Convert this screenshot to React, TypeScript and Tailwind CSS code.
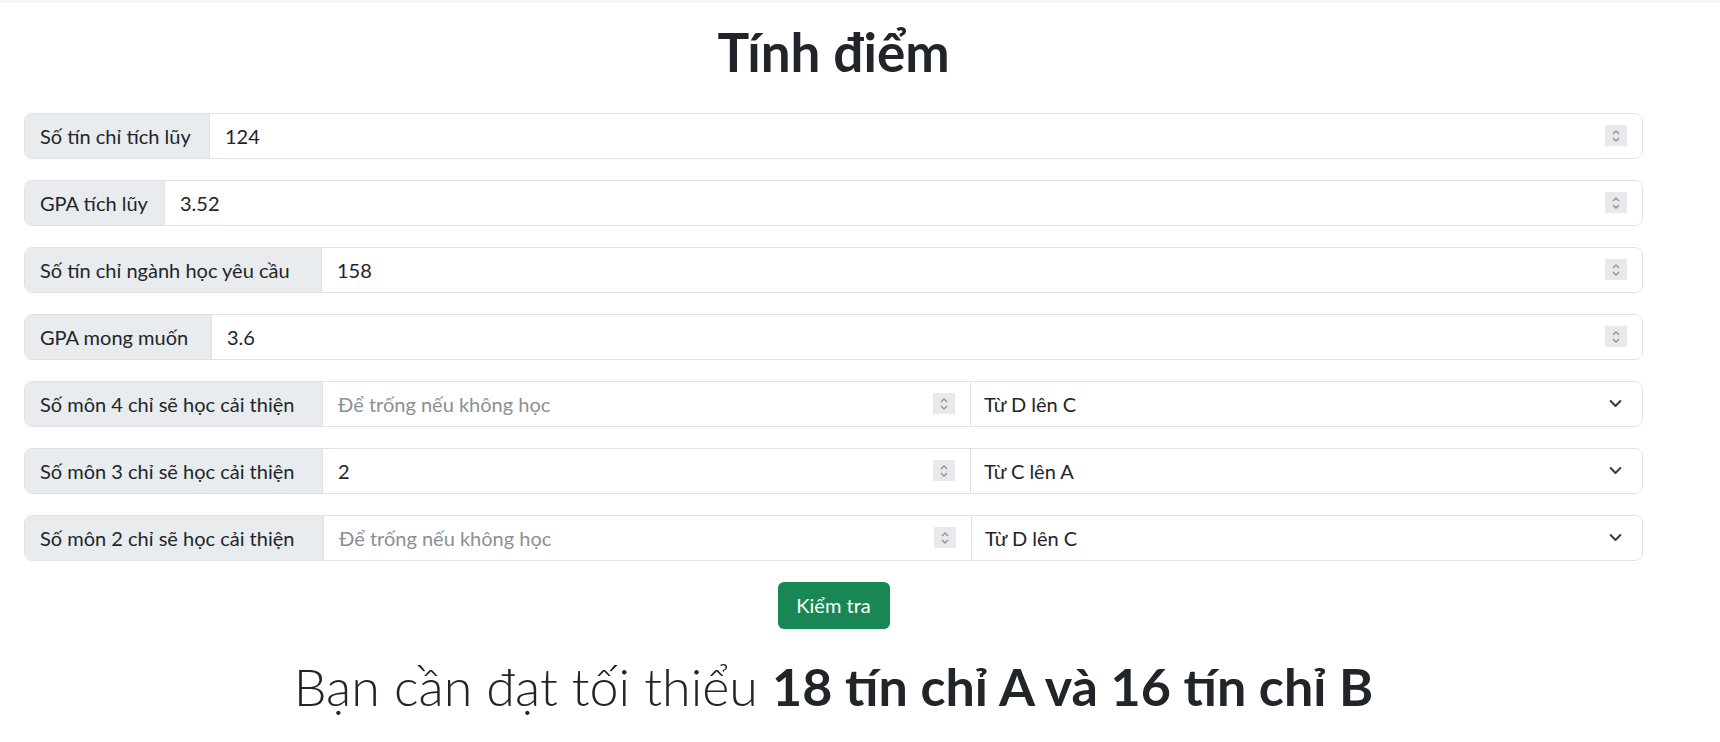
import React from 'react'

const Spinner = () => (
  <div className="w-[22px] h-[21px] bg-[#e9e9ed] flex items-center justify-center shrink-0">
    <svg width="10" height="14" viewBox="0 0 10 14" fill="none" stroke="#8f8f9d" strokeWidth="1.3">
      <polyline points="2,5 5,2 8,5" />
      <polyline points="2,9 5,12 8,9" />
    </svg>
  </div>
)

const Chevron = () => (
  <svg width="13" height="9" viewBox="0 0 16 10" fill="none" stroke="#343a40" strokeWidth="2.4" strokeLinecap="round" strokeLinejoin="round">
    <polyline points="2,2 8,8 14,2" />
  </svg>
)

type Row = { label: string; w: string; value?: string; placeholder?: string; select?: string }

const rows: Row[] = [
  { label: 'Số tín chỉ tích lũy', w: 'w-[185px]', value: '124' },
  { label: 'GPA tích lũy', w: 'w-[140px]', value: '3.52' },
  { label: 'Số tín chỉ ngành học yêu cầu', w: 'w-[297px]', value: '158' },
  { label: 'GPA mong muốn', w: 'w-[187px]', value: '3.6' },
  { label: 'Số môn 4 chỉ sẽ học cải thiện', w: 'w-[298px]', placeholder: 'Để trống nếu không học', select: 'Từ D lên C' },
  { label: 'Số môn 3 chỉ sẽ học cải thiện', w: 'w-[298px]', value: '2', select: 'Từ C lên A' },
  { label: 'Số môn 2 chỉ sẽ học cải thiện', w: 'w-[299px]', placeholder: 'Để trống nếu không học', select: 'Từ D lên C' },
]

function InputRow({ row }: { row: Row }) {
  return (
    <div className="flex h-[46px] border border-[#dee2e6] rounded-[8px] overflow-hidden text-[20px]">
      <div className={`${row.w} shrink-0 bg-[#e9ecef] border-r border-[#dee2e6] flex items-center pl-[15px] text-[#212529] whitespace-nowrap`}>
        {row.label}
      </div>
      <div className={`${row.select ? 'w-[647px]' : 'flex-1'} flex items-center pl-[15px] pr-[15px] bg-white`}>
        <span className={`flex-1 ${row.value ? 'text-[#212529]' : 'text-[#8a8f95]'}`}>
          {row.value ?? row.placeholder}
        </span>
        <Spinner />
      </div>
      {row.select && (
        <div className="flex-1 border-l border-[#dee2e6] flex items-center pl-[13px] pr-[20px] bg-white">
          <span className="flex-1 text-[#212529]">{row.select}</span>
          <Chevron />
        </div>
      )}
    </div>
  )
}

export default function App() {
  return (
    <div className="min-h-screen bg-white font-['Lato',sans-serif] text-[#212529]">
      <div className="h-[3px] bg-[#f5f5f5]" />
      <div className="w-[1619px] ml-[24px]">
        <h1 className="mt-[17px] text-center text-[53px] leading-[1.2] font-bold">Tính điểm</h1>
        <div className="mt-[29px] flex flex-col gap-[21px]">
          {rows.map((r) => (
            <InputRow key={r.label} row={r} />
          ))}
        </div>
        <div className="mt-[21px] flex justify-center">
          <button className="w-[112px] h-[47px] rounded-[6px] bg-[#198754] text-white text-[20px]">
            Kiểm tra
          </button>
        </div>
        <p className="mt-[26px] text-center text-[52px] leading-[1.2] font-light">
          Bạn cần đạt tối thiểu <span className="font-bold">18 tín chỉ A và 16 tín chỉ B</span>
        </p>
      </div>
    </div>
  )
}
